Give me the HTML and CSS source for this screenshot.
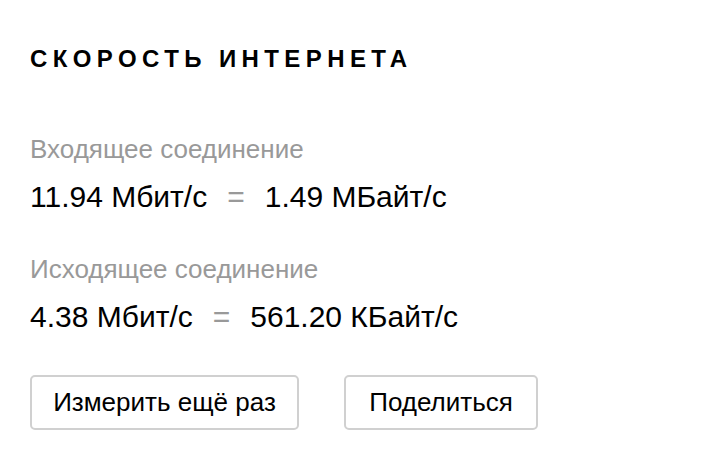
FILE: index.html
```html
<!DOCTYPE html>
<html lang="ru">
<head>
<meta charset="utf-8">
<link rel="stylesheet" href="styles.css">
</head>
<body>
<section class="speed">
  <h1 class="title">Скорость интернета</h1>
  <div class="block">
    <div class="label">Входящее соединение</div>
    <div class="value">11.94 Мбит/с<span class="eq">=</span>1.49 МБайт/с</div>
  </div>
  <div class="block">
    <div class="label">Исходящее соединение</div>
    <div class="value">4.38 Мбит/с<span class="eq">=</span>561.20 КБайт/с</div>
  </div>
  <div class="actions">
    <button class="btn btn-wide">Измерить ещё раз</button>
    <button class="btn btn-share">Поделиться</button>
  </div>
</section>
</body>
</html>
```
FILE: styles.css
```css
html, body {
  margin: 0;
  padding: 0;
  background: #fff;
}
body {
  font-family: "Liberation Sans", Arial, sans-serif;
  color: #000;
}
.speed {
  padding: 45px 30px 0 30px;
}
.title {
  margin: 0;
  font-size: 24px;
  line-height: 28px;
  font-weight: bold;
  text-transform: uppercase;
  letter-spacing: 5.4px;
}
.title + .block {
  margin-top: 61px;
}
.block + .block {
  margin-top: 40px;
}
.label {
  font-size: 26px;
  line-height: 30px;
  color: #999;
}
.value {
  margin-top: 16px;
  font-size: 30px;
  line-height: 34px;
  color: #000;
}
.eq {
  color: #999;
  margin: 0 20px;
}
.actions {
  margin-top: 41px;
  display: flex;
  gap: 45px;
}
.btn {
  font-family: "Liberation Sans", Arial, sans-serif;
  font-size: 26px;
  color: #000;
  background: #fff;
  border: 2px solid #d0d0d0;
  border-radius: 5px;
  height: 55px;
  padding: 0;
}
.btn-wide {
  width: 269px;
}
.btn-share {
  width: 194px;
}
```
